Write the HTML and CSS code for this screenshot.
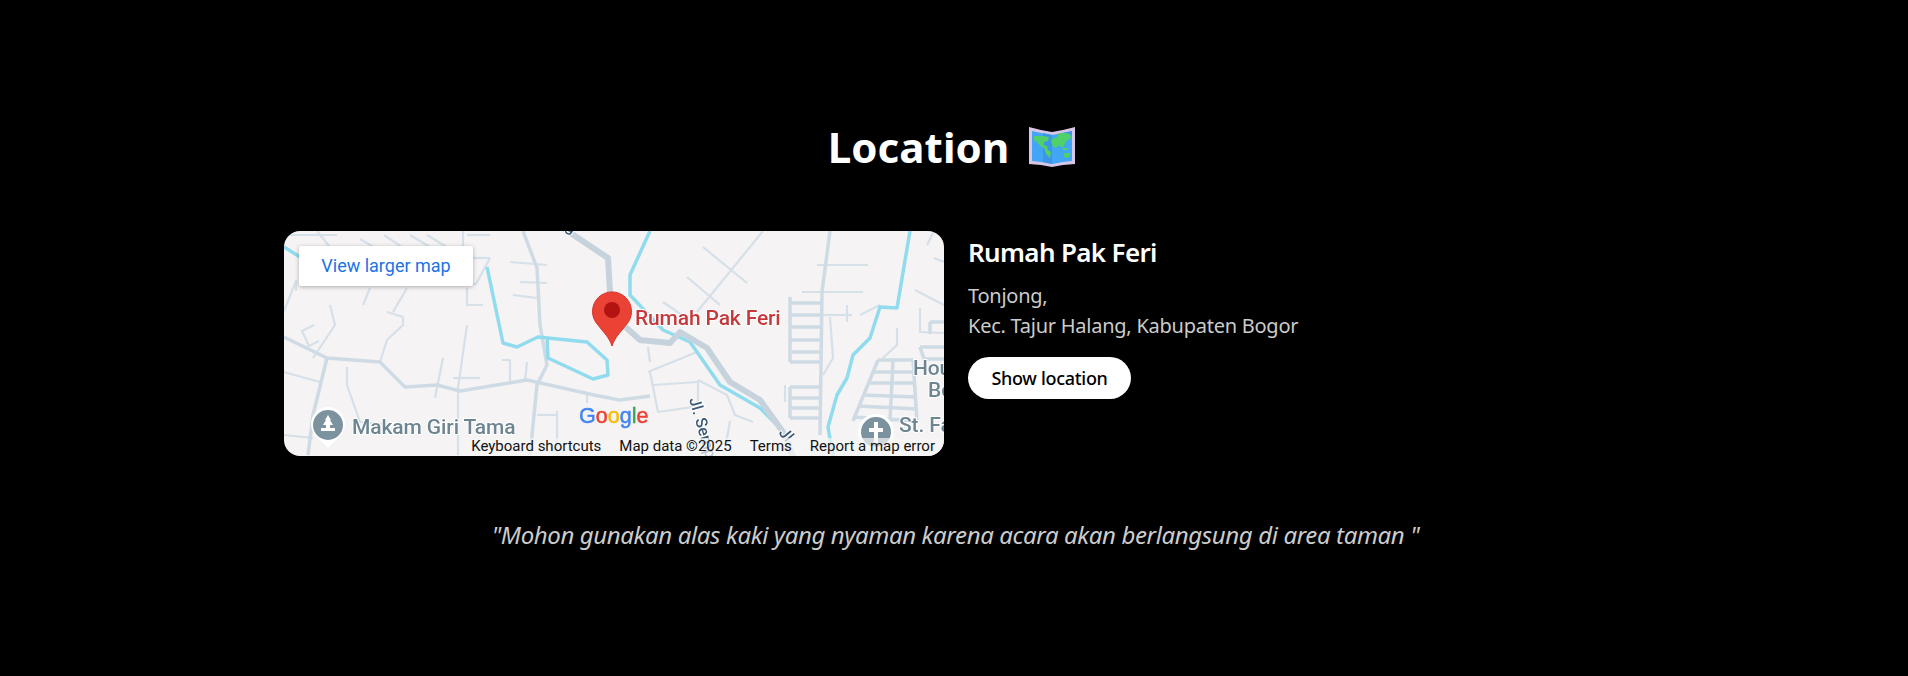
FILE: index.html
```html
<!DOCTYPE html>
<html lang="en">
<head>
    <meta charset="UTF-8">
    <meta name="viewport" content="width=device-width, initial-scale=1.0">
    <title>Location</title>
    <link rel="stylesheet" href="styles.css">
</head>
<body>
    <section class="location">
        <h1 class="title">
            Location
            <svg class="title-emoji" viewBox="0 0 46 40">
                <polygon class="emoji-edge" points="0,0 12,3 23,5 34,3 46,0 46,37 34,38 23,40 12,38 0,37"/>
                <polygon class="emoji-sea" points="3,4 12,6 23,8 34,6 43,4 43,34 34,35 23,37 12,35 3,34"/>
                <polygon class="emoji-fold" points="14,6 23,8 23,37 14,35"/>
                <polygon class="emoji-fold" points="32,6 43,4 43,8 32,10"/>
                <path class="emoji-land" d="M5 9l9 0 6 1-1 4-4 1 0 3 3 1 1 4 3 2-1 6-4-4-2-6-4-2-3-4-3-2zM23 12l5-2 2-4 7 0 4 1 1 4-3 2-3 3-1 4-4 0-1-2-3 3-3-1-2-6zM33 21l6 0 0 2-5 0zM35 26l6 0 0 3-3 2-3-1z"/>
            </svg>
        </h1>

        <div class="content">
            <div class="map">
                <svg class="map-canvas" viewBox="0 0 660 225">
                    <rect class="map-bg" width="660" height="225"/>

                    <g class="road-minor">
                        <polyline points="0,141 36,151"/>
                        <polyline points="46,74 51,94 29,127"/>
                        <polyline points="96,131 103,109 119,94 119,86 103,81"/>
                        <polyline points="123,57 109,81"/>
                        <polyline points="86,57 79,74"/>
                        <polyline points="183,94 174,157 174,224"/>
                        <polyline points="159,127 151,167"/>
                        <polyline points="63,136 63,154 76,191 106,194"/>
                        <polyline points="0,204 29,207"/>
                        <polyline points="183,57 183,74 199,74"/>
                        <polyline points="226,31 263,34"/>
                        <polyline points="236,51 263,52"/>
                        <polyline points="229,64 253,67"/>
                        <polyline points="218,129 226,129 226,151"/>
                        <polyline points="169,147 196,147"/>
                        <polyline points="243,131 241,150"/>
                        <polyline points="253,184 273,184"/>
                        <polyline points="273,180 273,224"/>
                        <polyline points="303,162 303,172"/>
                        <polyline points="0,4 53,4"/>
                        <polyline points="33,0 45,15"/>
                        <polyline points="76,8 110,28"/>
                        <polyline points="100,4 140,31"/>
                        <polyline points="126,4 176,34"/>
                        <polyline points="143,4 176,24"/>
                        <polyline points="179,0 179,53 192,53 206,27"/>
                        <polyline points="179,27 206,27"/>
                        <polyline points="183,4 206,4"/>
                        <polyline points="12,60 12,50 0,80"/>
                        <polyline points="30,94 18,100 25,115 35,110"/>
                        <polyline points="419,16 463,52"/>
                        <polyline points="479,0 413,81"/>
                        <polyline points="403,46 436,74"/>
                        <polyline points="379,71 408,91"/>
                        <polyline points="364,141 413,121"/>
                        <polyline points="364,116 366,131"/>
                        <polyline points="366,141 374,181 409,176"/>
                        <polyline points="369,154 414,151"/>
                        <polyline points="414,149 443,164 451,184 469,191"/>
                        <polyline points="414,149 414,176"/>
                        <polyline points="501,154 501,171"/>
                        <polyline points="546,86 549,127 539,144"/>
                        <polyline points="533,34 584,34"/>
                        <polyline points="518,61 579,61"/>
                        <polyline points="536,84 568,84"/>
                        <polyline points="563,74 563,91"/>
                        <polyline points="576,84 596,74"/>
                        <polyline points="613,97 613,114 599,127"/>
                        <polyline points="631,59 660,74"/>
                        <polyline points="636,77 636,101 660,102"/>
                        <polyline points="643,14 650,0"/>
                        <polyline points="650,27 660,31"/>
                        <polyline points="446,190 440,224"/>
                    </g>

                    <g class="road-mid">
                        <polyline points="0,106 43,127 96,131 121,156 153,154 176,160 243,149 310,164 336,169 366,165"/>
                        <polyline points="239,0 253,37 256,94 263,134 253,154 246,224"/>
                        <polyline points="43,127 29,184 24,224"/>
                        <polyline points="546,0 538,61 536,204"/>
                        <polyline points="506,72 538,72"/>
                        <polyline points="506,84 538,84"/>
                        <polyline points="506,96 538,96"/>
                        <polyline points="506,109 538,109"/>
                        <polyline points="506,121 538,121"/>
                        <polyline points="506,131 538,131"/>
                        <polyline points="506,66 506,131"/>
                        <polyline points="506,156 536,156"/>
                        <polyline points="506,167 536,167"/>
                        <polyline points="506,177 536,177"/>
                        <polyline points="506,187 536,187"/>
                        <polyline points="506,156 506,187"/>
                        <polyline points="594,129 629,129"/>
                        <polyline points="594,129 569,190"/>
                        <polyline points="629,129 633,191"/>
                        <polyline points="609,129 606,191"/>
                        <polyline points="589,141 631,141"/>
                        <polyline points="584,152 632,152"/>
                        <polyline points="579,164 632,166"/>
                        <polyline points="574,175 633,178"/>
                        <polyline points="569,186 633,190"/>
                        <polyline points="646,91 660,91"/>
                        <polyline points="646,91 646,103"/>
                        <polyline points="636,116 660,116"/>
                        <polyline points="636,116 640,128 660,128"/>
                    </g>

                    <g class="river">
                        <polyline points="0,16 16,26"/>
                        <polyline points="203,36 219,112 233,116 254,106 303,111 323,129 324,144 309,148 264,127 263,107"/>
                        <polyline points="366,0 346,44 346,64 379,99 406,111 436,154 476,177 496,197"/>
                        <polyline points="626,0 613,77 596,76 586,107 569,124 563,147 553,164 544,196 549,225"/>
                    </g>

                    <g class="road-main">
                        <polyline points="279,-3 324,27 326,61"/>
                        <polyline points="336,91 356,109 386,112 396,101 423,117 446,151 476,169 499,201 510,228"/>
                    </g>

                    <g class="poi-icon">
                        <path class="poi-halo" d="M44 217l-12-12a17 17 0 1 1 24 0z"/>
                        <circle cx="44" cy="194" r="15"/>
                        <path class="poi-halo" d="M44 184l3 5-1 0 3 5-3 0 0 3 5 0 0 3-14 0 0-3 5 0 0-3-3 0 3-5-1 0z"/>
                    </g>
                    <g class="poi-icon">
                        <circle class="poi-halo" cx="592" cy="201" r="18"/>
                        <circle cx="592" cy="201" r="15"/>
                        <path class="poi-halo" d="M590 191h4v6h5v4h-5v12h-4v-12h-5v-4h5z"/>
                    </g>

                    <text class="label-poi" x="68" y="203">Makam Giri Tama</text>
                    <text class="label-poi" x="629" y="144">Hou</text>
                    <text class="label-poi" x="644" y="166">Bo</text>
                    <text class="label-poi" x="615" y="201">St. Fa</text>
                    <text class="label-place" x="351" y="94">Rumah Pak Feri</text>
                    <text class="label-street" transform="translate(405 168) rotate(74)">Jl. Sempak</text>
                    <text class="label-street" transform="translate(494 202) rotate(50)">Jl</text>
                    <text class="label-street" transform="translate(281 -2) rotate(32)">g</text>

                    <path class="pin" d="M328 115c-3-9-8-13-14-21a19.500 19.500 0 1 1 28 0c-6 8-11 12-14 21z"/>
                    <circle class="pin-dot" cx="328" cy="79" r="8"/>

                    <text class="google" x="295" y="192"><tspan class="g-blue">G</tspan><tspan class="g-red">o</tspan><tspan class="g-yellow">o</tspan><tspan class="g-blue">g</tspan><tspan class="g-green">l</tspan><tspan class="g-red">e</tspan></text>
                </svg>

                <a class="map-link" href="#">View larger map</a>

                <div class="map-attrib">
                    <span>Keyboard shortcuts</span>
                    <span>Map data ©2025</span>
                    <span>Terms</span>
                    <span>Report a map error</span>
                </div>
            </div>

            <div class="info">
                <h2 class="info-name">Rumah Pak Feri</h2>
                <p class="info-address">Tonjong,<br>Kec. Tajur Halang, Kabupaten Bogor</p>
                <button class="info-btn" type="button">Show location</button>
            </div>
        </div>

        <p class="quote">"Mohon gunakan alas kaki yang nyaman karena acara akan berlangsung di area taman "</p>
    </section>
</body>
</html>
```

FILE: styles.css
```css
body {
    margin: 0;
    background-color: #000;
    color: #fff;
    font-family: "Noto Sans", "Open Sans", sans-serif;
}
.location {
    width: 1340px;
    height: 676px;
    margin: 0 auto;
    padding-top: 112px;
    box-sizing: border-box;
}
.title {
    display: flex;
    justify-content: center;
    align-items: center;
    gap: 20px;
    margin: 0 0 50px;
    height: 69px;
    padding-right: 5px;
    font-size: 42px;
    font-weight: 700;
    letter-spacing: 0.1px;
}
.title-emoji {
    width: 46px;
    height: 40px;
}
.emoji-edge {
    fill: #d8c6e6;
}
.emoji-sea {
    fill: #42a5f5;
}
.emoji-fold {
    fill: #3d95e6;
}
.emoji-land {
    fill: #4fd068;
}
.content {
    display: flex;
    gap: 24px;
}
.map {
    position: relative;
    width: 660px;
    height: 225px;
    border-radius: 16px;
    overflow: hidden;
    flex-shrink: 0;
}
.map-canvas {
    display: block;
    width: 660px;
    height: 225px;
    font-family: Roboto, sans-serif;
    filter: blur(0.4px);
}
.map-bg {
    fill: #f5f3f4;
}
.map-canvas polyline {
    fill: none;
    stroke-linejoin: round;
}
.road-minor polyline {
    stroke: #d6e0e8;
    stroke-width: 2.2;
}
.road-mid polyline {
    stroke: #cfdbe4;
    stroke-width: 3.5;
}
.road-main polyline {
    stroke: #c6d3dc;
    stroke-width: 6;
}
.river polyline {
    stroke: #90dcee;
    stroke-width: 3.5;
}
.poi-icon {
    fill: #7c929f;
}
.poi-halo {
    fill: #fff;
}
.label-poi,
.label-place,
.label-street {
    stroke: #fff;
    stroke-width: 2px;
    paint-order: stroke;
    font-weight: 500;
}
.label-poi {
    fill: #6d8491;
    font-size: 21px;
    letter-spacing: -0.1px;
}
.label-place {
    fill: #c5393d;
    font-size: 21px;
    letter-spacing: -0.15px;
}
.label-street {
    fill: #3e5a77;
    font-size: 16px;
}
.pin {
    fill: #ea4335;
    stroke: #d5352a;
}
.pin-dot {
    fill: #b31412;
}
.google {
    font-family: "Liberation Sans", Arial, sans-serif;
    font-size: 21.500px;
    stroke-width: 0.5px;
}
.g-blue {
    fill: #4285f4;
    stroke: #4285f4;
}
.g-red {
    fill: #ea4335;
    stroke: #ea4335;
}
.g-yellow {
    fill: #fbbc05;
    stroke: #fbbc05;
}
.g-green {
    fill: #34a853;
    stroke: #34a853;
}
.map-link {
    position: absolute;
    left: 15px;
    top: 15px;
    width: 174px;
    height: 40px;
    line-height: 40px;
    text-align: center;
    background-color: #fff;
    border-radius: 2px;
    box-shadow: 0 1px 4px rgba(0, 0, 0, 0.3);
    color: #1a73e8;
    font-family: Roboto, sans-serif;
    font-size: 18px;
    text-decoration: none;
}
.map-attrib {
    position: absolute;
    right: 0;
    bottom: 0;
    display: flex;
    gap: 18px;
    height: 18px;
    line-height: 16px;
    padding: 0 9px 0 4px;
    background-color: rgba(245, 245, 245, 0.7);
    color: #111;
    font-family: Roboto, sans-serif;
    font-size: 15px;
}
.info-name {
    margin: 8px 0 16px;
    font-size: 26px;
    font-weight: 600;
    line-height: 26px;
    letter-spacing: -0.65px;
}
.info-address {
    margin: 0 0 16px;
    color: #ccc;
    font-size: 20px;
    line-height: 30px;
    letter-spacing: -0.25px;
}
.info-btn {
    width: 163px;
    height: 42px;
    padding: 0;
    border: none;
    border-radius: 21px;
    background-color: #fff;
    color: #000;
    font-family: inherit;
    font-size: 18px;
    font-weight: 500;
    letter-spacing: -0.3px;
    cursor: pointer;
}
.quote {
    margin: 62px 0 0;
    padding-left: 3px;
    color: #ccc;
    font-size: 24px;
    font-style: italic;
    letter-spacing: -0.38px;
    text-align: center;
}
```
